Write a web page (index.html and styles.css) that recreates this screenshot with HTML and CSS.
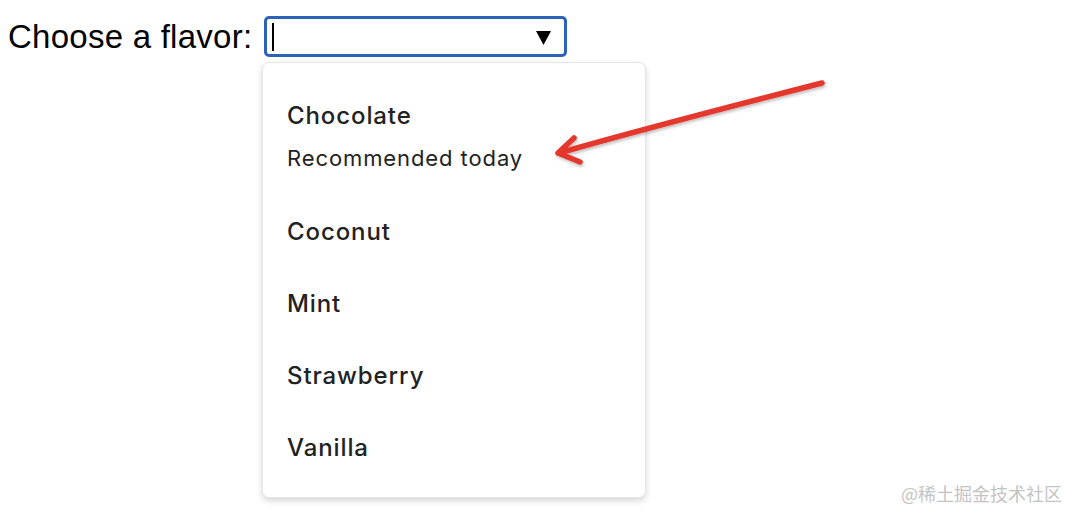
FILE: index.html
```html
<!DOCTYPE html>
<html lang="en">

<head>
    <meta charset="UTF-8">
    <meta name="viewport" content="width=device-width, initial-scale=1.0">
    <link rel="stylesheet" href="styles.css">
    <title>Choose a flavor</title>
</head>

<body>
    <!-- Fila con la etiqueta y el campo de búsqueda -->
    <div class="fila">
        <label class="etiqueta" for="sabor">Choose a flavor:</label>
        <div class="campo" id="sabor">
            <span class="cursor"></span>
            <svg class="flecha" width="15" height="14" viewBox="0 0 15 14">
                <path d="M0 0 H15 L7.5 14 Z" fill="#000"/>
            </svg>
        </div>
    </div>

    <!-- Lista desplegable de sabores -->
    <ul class="lista">
        <li class="opcion">
            <span class="nombre">Chocolate</span>
            <span class="detalle">Recommended today</span>
        </li>
        <li class="opcion"><span class="nombre">Coconut</span></li>
        <li class="opcion"><span class="nombre">Mint</span></li>
        <li class="opcion"><span class="nombre">Strawberry</span></li>
        <li class="opcion"><span class="nombre">Vanilla</span></li>
    </ul>

    <!-- Flecha roja de anotación -->
    <svg class="anotacion" width="1078" height="522" viewBox="0 0 1078 522">
        <defs>
            <filter id="sombra" x="-10%" y="-10%" width="120%" height="140%">
                <feDropShadow dx="1" dy="2" stdDeviation="1.5" flood-color="#000" flood-opacity="0.25"/>
            </filter>
        </defs>
        <g fill="none" stroke="#e4392d" stroke-width="5.5" stroke-linecap="round" stroke-linejoin="round" filter="url(#sombra)">
            <path d="M822 83 C 740 104, 640 130, 559 153"/>
            <path d="M574 138 L558 153 L580 162"/>
        </g>
    </svg>

    <div class="marca">@稀土掘金技术社区</div>
</body>

</html>
```

FILE: styles.css
```css
body {
    margin: 8px;
    background-color: #fff;
    font-family: "Liberation Sans", Arial, sans-serif;
    color: #000;
}

.fila {
    display: flex;
    align-items: center;
    gap: 12px;
    margin-top: 8px;
}

.etiqueta {
    font-size: 33px;
    line-height: 41px;
    letter-spacing: 0.25px;
}

.campo {
    width: 279px;
    height: 35px;
    border: 3px solid #2c63b8;
    border-radius: 5px;
    display: flex;
    align-items: center;
    justify-content: space-between;
    padding: 0 13px 0 5px;
}

.cursor {
    width: 2px;
    height: 28px;
    background-color: #000;
}

.flecha {
    display: block;
    margin-top: 3px;
}

.lista {
    position: absolute;
    top: 62px;
    left: 262px;
    width: 384px;
    height: 436px;
    box-sizing: border-box;
    margin: 0;
    padding: 17px 0 15px;
    list-style: none;
    background-color: #fff;
    border: 1px solid #e6e6e6;
    border-radius: 7px;
    box-shadow: 0px 3px 6px rgba(0, 0, 0, 0.16);
    font-family: Inter, "Noto Sans", sans-serif;
    color: #222;
}

.opcion {
    display: flex;
    flex-direction: column;
    padding: 16px 24px;
}

.nombre {
    font-size: 24px;
    line-height: 40px;
    font-weight: 500;
    letter-spacing: 0.9px;
}

.detalle {
    font-size: 22px;
    line-height: 44px;
    letter-spacing: 0.9px;
}

.anotacion {
    position: absolute;
    top: 0;
    left: 0;
    pointer-events: none;
}

.marca {
    position: absolute;
    right: 16px;
    bottom: 16px;
    font-family: "Noto Sans CJK SC", sans-serif;
    font-size: 18px;
    color: #c4c4c4;
}
```
